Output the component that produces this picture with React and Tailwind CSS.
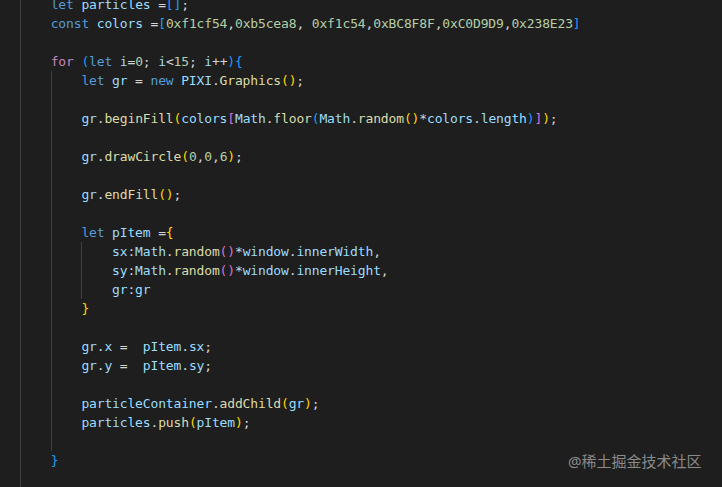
const K = 'text-[#569cd6]'
const P = 'text-[#c586c0]'
const V = 'text-[#9cdcfe]'
const F = 'text-[#dcdcaa]'
const N = 'text-[#b5cea8]'
const O = 'text-[#d4d4d4]'
const B1 = 'text-[#ffd700]'
const B2 = 'text-[#da70d6]'
const B3 = 'text-[#179fff]'

// [indent, guides, tokens]
const lines = [
    [1, 1, [['let', K], [' particles', V], [' =', O], ['[]', B3], [';', O]]],
    [1, 1, [['const', K], [' colors', V], [' =', O], ['[', B3], ['0xf1cf54', N], [',', O], ['0xb5cea8', N], [', ', O], ['0xf1c54', N], [',', O], ['0xBC8F8F', N], [',', O], ['0xC0D9D9', N], [',', O], ['0x238E23', N], [']', B3]]],
    [0, 1, []],
    [1, 1, [['for', P], [' ', O], ['(', B3], ['let', K], [' i', V], ['=', O], ['0', N], ['; ', O], ['i', V], ['<', O], ['15', N], ['; ', O], ['i', V], ['++', O], [')', B3], ['{', B3]]],
    [2, 2, [['let', K], [' gr', V], [' = ', O], ['new', K], [' PIXI', V], ['.', O], ['Graphics', F], ['()', B1], [';', O]]],
    [0, 2, []],
    [2, 2, [['gr', V], ['.', O], ['beginFill', F], ['(', B1], ['colors', V], ['[', B2], ['Math', V], ['.', O], ['floor', F], ['(', B3], ['Math', V], ['.', O], ['random', F], ['()', B1], ['*', O], ['colors', V], ['.', O], ['length', V], [')', B3], [']', B2], [')', B1], [';', O]]],
    [0, 2, []],
    [2, 2, [['gr', V], ['.', O], ['drawCircle', F], ['(', B1], ['0', N], [',', O], ['0', N], [',', O], ['6', N], [')', B1], [';', O]]],
    [0, 2, []],
    [2, 2, [['gr', V], ['.', O], ['endFill', F], ['()', B1], [';', O]]],
    [0, 2, []],
    [2, 2, [['let', K], [' pItem', V], [' =', O], ['{', B1]]],
    [3, 3, [['sx', V], [':', O], ['Math', V], ['.', O], ['random', F], ['()', B2], ['*', O], ['window', V], ['.', O], ['innerWidth', V], [',', O]]],
    [3, 3, [['sy', V], [':', O], ['Math', V], ['.', O], ['random', F], ['()', B2], ['*', O], ['window', V], ['.', O], ['innerHeight', V], [',', O]]],
    [3, 3, [['gr', V], [':', O], ['gr', V]]],
    [2, 2, [['}', B1]]],
    [0, 2, []],
    [2, 2, [['gr', V], ['.', O], ['x', V], [' =  ', O], ['pItem', V], ['.', O], ['sx', V], [';', O]]],
    [2, 2, [['gr', V], ['.', O], ['y', V], [' =  ', O], ['pItem', V], ['.', O], ['sy', V], [';', O]]],
    [0, 2, []],
    [2, 2, [['particleContainer', V], ['.', O], ['addChild', F], ['(', B1], ['gr', V], [')', B1], [';', O]]],
    [2, 2, [['particles', V], ['.', O], ['push', F], ['(', B1], ['pItem', V], [')', B1], [';', O]]],
    [0, 2, []],
    [1, 1, [['}', B3]]],
    [0, 1, []],
    [0, 1, []],
]

const Line = ({ indent, guides, tokens }) => {
    const cols = Math.max(indent, guides)
    return (
        <div className="flex h-[19px] leading-[19px] whitespace-pre">
            {Array.from({ length: cols }).map((_, i) => (
                <span
                    key={i}
                    className={i < guides ? 'shrink-0 w-[30.7px] border-l border-[#404040]' : 'shrink-0 w-[30.7px]'}
                />
            ))}
            {tokens.map(([t, c], i) => (
                <span key={i} className={c}>{t}</span>
            ))}
        </div>
    )
}

export default function App() {
    return (
        <div className="relative w-[722px] h-[487px] overflow-hidden bg-[#1e1e1e]">
            <div
                className="mt-[-5.5px] pl-[20px] text-[13px] tracking-[-0.15px] text-[#d4d4d4]"
                style={{ fontFamily: '"DejaVu Sans Mono", "Liberation Mono", monospace' }}
            >
                {lines.map(([indent, guides, tokens], i) => (
                    <Line key={i} indent={indent} guides={guides} tokens={tokens} />
                ))}
            </div>
            <div
                className="absolute left-[568px] top-[450px] text-[15px] leading-[22px] text-[#8a8a8a]"
                style={{ fontFamily: '"Noto Sans", "Noto Sans CJK SC", sans-serif' }}
            >
                @稀土掘金技术社区
            </div>
        </div>
    )
}
